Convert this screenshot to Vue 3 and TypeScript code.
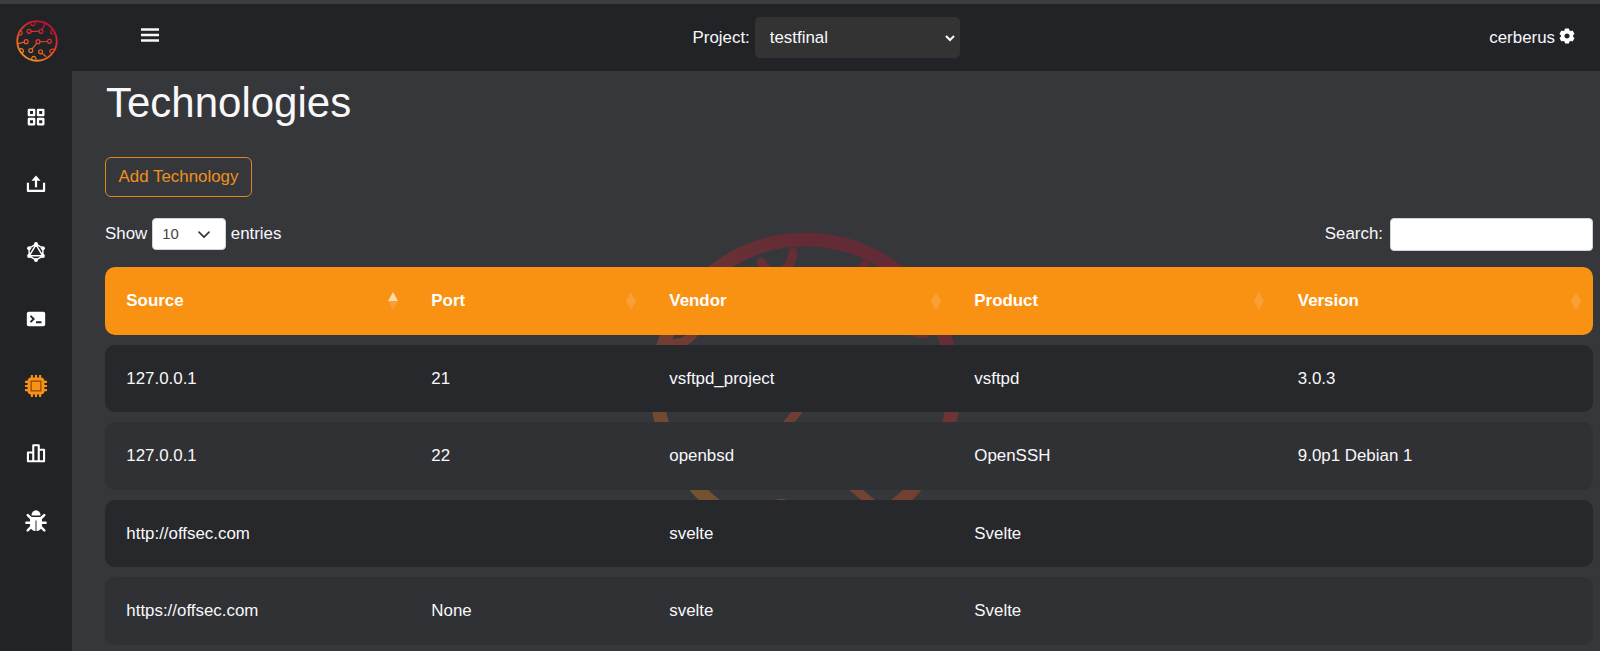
<script setup lang="ts">
import { ref } from 'vue'

interface Technology {
  source: string
  port: string
  vendor: string
  product: string
  version: string
}

const project = ref('testfinal')
const pageSize = ref('10')
const search = ref('')

const columns = ['Source', 'Port', 'Vendor', 'Product', 'Version']

const rows: Technology[] = [
  { source: '127.0.0.1', port: '21', vendor: 'vsftpd_project', product: 'vsftpd', version: '3.0.3' },
  { source: '127.0.0.1', port: '22', vendor: 'openbsd', product: 'OpenSSH', version: '9.0p1 Debian 1' },
  { source: 'http://offsec.com', port: '', vendor: 'svelte', product: 'Svelte', version: '' },
  { source: 'https://offsec.com', port: 'None', vendor: 'svelte', product: 'Svelte', version: '' },
]
</script>

<template>
  <div class="page">
    <svg width="0" height="0" class="defs">
      <defs>
        <linearGradient id="brand" gradientUnits="userSpaceOnUse" x1="22" y1="-50" x2="-38" y2="58">
          <stop offset="0" stop-color="#c2122f" />
          <stop offset="0.45" stop-color="#e8402a" />
          <stop offset="1" stop-color="#f79a1c" />
        </linearGradient>
        <symbol id="brain" viewBox="-64 -64 128 128">
          <g fill="none" stroke="url(#brand)" stroke-width="3.6" stroke-linecap="round">
            <circle r="60.2" stroke-width="5.6" />
            <circle cx="-24" cy="-29.5" r="6" />
            <circle cx="12" cy="-29.5" r="6" />
            <path d="M-18-29.51L6-29.5M15-34.500L24-50" />
            <circle cx="-33" cy="2" r="6" />
            <path d="M-39 3L-56 8" />
            <circle cx="3" cy="2" r="6" />
            <circle cx="38" cy="1" r="6" />
            <path d="M9 2.01L32 1.500M-1 7L-15 24" />
            <circle cx="-19" cy="29" r="6" />
            <circle cx="11" cy="33" r="6" />
            <path d="M15 37L27 47" />
            <path d="M-18-51C-16-45-6-45-5-55" />
            <path d="M50-35C39-31 39-21 49-22" />
            <path d="M-51-31C-42-28-43-19-53-18" />
            <path d="M-53 24C-43 21-37 30-45 36" />
            <path d="M-16 55C-17 44.500-3 44.500-3 55" />
            <path d="M50 25C38 24 36 33 43 37" />
          </g>
        </symbol>
      </defs>
    </svg>

    <div class="strip"></div>

    <div class="shell">
      <aside class="sidebar">
        <svg class="logo"><use href="#brain" /></svg>
        <nav class="nav">
          <a class="nav-item">
            <svg viewBox="0 0 24 24" fill="none" stroke="currentColor" stroke-width="2.5" stroke-linejoin="round">
              <path d="M4.200 4.200h5.800v5.800H4.200zM14.200 4.200h5.800v5.800h-5.800zM4.200 14.200h5.800v5.800H4.200zM14.200 14.200h5.800v5.800h-5.800z" />
            </svg>
          </a>
          <a class="nav-item">
            <svg viewBox="0 0 24 24" fill="none" stroke="currentColor" stroke-width="2.4" stroke-linejoin="round">
              <path d="M3.200 10.500v9h17.600v-9M12 15.500V7" />
              <path d="M12 2.800l5 5.700H7z" fill="currentColor" stroke="none" />
            </svg>
          </a>
          <a class="nav-item">
            <svg viewBox="0 0 24 24" fill="none" stroke="currentColor" stroke-width="1.600">
              <path d="M12 3.500l7.500 4.300v8.600L12 20.700l-7.500-4.300V7.800zM12 4L4.700 16.200h14.600z" />
              <g fill="currentColor" stroke="none">
                <circle cx="12" cy="3.300" r="2.200" /><circle cx="19.500" cy="7.800" r="2.200" />
                <circle cx="19.500" cy="16.300" r="2.200" /><circle cx="12" cy="20.700" r="2.200" />
                <circle cx="4.500" cy="16.300" r="2.200" /><circle cx="4.500" cy="7.800" r="2.200" />
              </g>
            </svg>
          </a>
          <a class="nav-item">
            <svg viewBox="0 0 24 24">
              <rect x="2" y="4" width="20" height="16" rx="2" fill="currentColor" />
              <path d="M6 8.500l3.500 3.500L6 15.500M12 15.500h6" fill="none" stroke="#222326" stroke-width="2" />
            </svg>
          </a>
          <a class="nav-item active">
            <svg viewBox="0 0 24 24">
              <rect x="2.800" y="2.800" width="18.400" height="18.400" rx="4" fill="currentColor" />
              <path d="M7.500 .4v4M12 .4v4M16.500 .4v4M7.500 19.600v4M12 19.600v4M16.500 19.600v4M.4 7.500h4M.4 12h4M.4 16.500h4M19.600 7.500h4M19.600 12h4M19.600 16.500h4" stroke="currentColor" stroke-width="2.300" stroke-linecap="round" />
              <rect x="6.700" y="6.700" width="10.600" height="10.600" fill="none" stroke="#7a4a18" stroke-width="1.300" />
            </svg>
          </a>
          <a class="nav-item">
            <svg viewBox="0 0 24 24" fill="none" stroke="currentColor" stroke-width="2.300" stroke-linejoin="round">
              <path d="M3.200 21V11.500h5.800v9.500zM9 21V3.500h6v17.500zM15 21V8.500h5.800v12.500z" />
            </svg>
          </a>
          <a class="nav-item">
            <svg viewBox="0 0 24 24" fill="none" stroke="currentColor" stroke-width="2.700" stroke-linecap="round">
              <path d="M7 6a5 5.800 0 0 1 10 0z" fill="currentColor" stroke="none" />
              <path d="M5.500 7.500h13v9c0 4-3 6.500-6.500 6.500S5.500 20.500 5.500 16.500z" fill="currentColor" stroke="none" />
              <path d="M6.500 9L3 5.500M17.500 9L21 5.500M6 14H1.500M18 14h4.500M7 18l-4 4.300M17 18l4 4.300" />
              <path d="M12 11.500V23" stroke="#4b4c50" stroke-width="1.300" stroke-linecap="butt" />
            </svg>
          </a>
        </nav>
      </aside>

      <div class="main">
        <header class="topbar">
          <button class="burger" aria-label="Menu">
            <svg width="18" height="14" viewBox="0 0 18 14">
              <path d="M0 1.500h18M0 7h18M0 12.500h18" stroke="#f8f8fb" stroke-width="2.600" />
            </svg>
          </button>
          <label class="project">
            <span>Project:</span>
            <span class="select-wrap">
              <select v-model="project" class="project-select">
                <option>testfinal</option>
              </select>
              <svg class="project-arrow" width="10" height="7" viewBox="0 0 10 7">
                <path d="M1 1l4 4 4-4" fill="none" stroke="#fff" stroke-width="2" />
              </svg>
            </span>
          </label>
          <div class="user">
            <span>cerberus</span>
            <svg class="gear" width="16" height="16" viewBox="-8 -8 16 16">
              <circle r="4.400" fill="none" stroke="#fff" stroke-width="3.600" />
              <g fill="#fff">
                <rect v-for="angle in [0, 60, 120, 180, 240, 300]" :key="angle" x="-2.200" y="-7.600" width="4.400" height="3" rx="0.800" :transform="`rotate(${angle})`" />
              </g>
            </svg>
          </div>
        </header>

        <main class="content">
          <svg class="watermark"><use href="#brain" /></svg>
          <h1>Technologies</h1>
          <button class="add">Add Technology</button>

          <div class="controls">
            <label class="length">
              <span>Show</span>
              <span class="select-wrap">
                <select v-model="pageSize" class="length-select">
                  <option>10</option>
                </select>
                <svg class="length-arrow" width="12" height="8" viewBox="0 0 12 8">
                  <path d="M1 1.200l5 5 5-5" fill="none" stroke="#343a40" stroke-width="1.700" stroke-linecap="round" stroke-linejoin="round" />
                </svg>
              </span>
              <span>entries</span>
            </label>
            <label class="search">
              <span>Search:</span>
              <input v-model="search" type="search" />
            </label>
          </div>

          <div class="table" role="table">
            <div class="row head" role="row">
              <div v-for="(name, i) in columns" :key="name" class="cell" role="columnheader">
                <span>{{ name }}</span>
                <svg class="sort" width="10" height="18" viewBox="0 0 10 18">
                  <path d="M0 9L5 0l5 9z" fill="#fff" :opacity="i === 0 ? 0.65 : 0.14" />
                  <path d="M0 9l5 9 5-9z" fill="#fff" opacity="0.140" />
                </svg>
              </div>
            </div>
            <div v-for="row in rows" :key="row.source + row.port" class="row" role="row">
              <div class="cell">{{ row.source }}</div>
              <div class="cell">{{ row.port }}</div>
              <div class="cell">{{ row.vendor }}</div>
              <div class="cell">{{ row.product }}</div>
              <div class="cell">{{ row.version }}</div>
            </div>
          </div>
        </main>
      </div>
    </div>
  </div>
</template>

<style>
body {
  margin: 0;
  overflow: hidden;
}
</style>

<style scoped>
* {
  box-sizing: border-box;
}
.page {
  display: flex;
  flex-direction: column;
  width: 1600px;
  height: 651px;
  overflow: hidden;
  background: #36373a;
  color: #f8f8fb;
  font-family: "Liberation Sans", Arial, sans-serif;
  font-size: 16.9px;
  line-height: 25px;
}
.defs {
  position: absolute;
}
.strip {
  flex: none;
  height: 4px;
  background: #3c3d3c;
}
.shell {
  display: flex;
  flex: 1;
  min-height: 0;
}
.sidebar {
  display: flex;
  flex: none;
  flex-direction: column;
  align-items: center;
  width: 72px;
  background: #222326;
}
.logo {
  flex: none;
  width: 42px;
  height: 42px;
  margin: 16px 0 0 2px;
}
.nav {
  display: flex;
  flex-direction: column;
  margin-top: 21.300px;
}
.nav-item {
  display: flex;
  align-items: center;
  justify-content: center;
  height: 67.300px;
  color: #fff;
}
.nav-item svg {
  width: 22px;
  height: 22px;
}
.nav-item.active {
  color: #f99113;
}
.main {
  display: flex;
  flex: 1;
  flex-direction: column;
}
.topbar {
  display: grid;
  flex: none;
  grid-template-columns: 551.500px 1fr auto;
  height: 67px;
  padding: 0 25px 0 69px;
  background: #222326;
}
.burger {
  display: flex;
  justify-self: start;
  height: 14px;
  margin-top: 24px;
  padding: 0;
  border: 0;
  background: none;
}
.project {
  display: flex;
  gap: 5px;
  justify-self: start;
  height: 41px;
  margin-top: 13px;
  line-height: 41px;
}
.select-wrap {
  position: relative;
  display: block;
}
select {
  display: block;
  margin: 0;
  appearance: none;
  font-family: inherit;
}
.project-select {
  width: 205px;
  height: 41px;
  padding: 0 15px;
  border: 0;
  border-radius: 5px;
  background: #333;
  color: #f8f8fb;
  font-size: 16.9px;
}
.project-arrow {
  position: absolute;
  top: 18px;
  right: 5px;
}
.user {
  display: flex;
  gap: 4px;
  height: 41px;
  margin-top: 13px;
  line-height: 41px;
}
.gear {
  margin-top: 10.500px;
}
.content {
  position: relative;
  flex: 1;
  padding: 0 7px 0 33px;
}
.watermark {
  position: absolute;
  top: 159px;
  left: 575.500px;
  width: 315px;
  height: 315px;
  opacity: 0.32;
}
h1 {
  margin: 0 0 0 1px;
  padding-top: 7px;
  font-size: 42px;
  font-weight: 400;
  line-height: 50px;
}
.add {
  display: block;
  width: 147px;
  height: 40px;
  margin-top: 29px;
  padding: 0;
  border: 1px solid #d98826;
  border-radius: 6px;
  background: none;
  color: #ef9020;
  font-family: inherit;
  font-size: 16.9px;
}
.controls {
  display: flex;
  justify-content: space-between;
  height: 33px;
  margin-top: 21px;
  line-height: 31px;
}
.length {
  display: flex;
  gap: 5px;
}
.length-select {
  width: 73.500px;
  height: 32px;
  padding: 0 9px;
  border: 1px solid #ced4da;
  border-radius: 4px;
  background: #fff;
  color: #444;
  font-size: 14.800px;
}
.length-arrow {
  position: absolute;
  top: 13px;
  right: 16px;
}
.search {
  display: flex;
  gap: 7px;
}
.search input {
  width: 203px;
  height: 33px;
  padding: 4px 8px;
  border: 1px solid #ced4da;
  border-radius: 4px;
  background: #fff;
}
.table {
  position: relative;
  display: flex;
  flex-direction: column;
  gap: 10px;
  margin-top: 16px;
}
.row {
  display: grid;
  flex: none;
  grid-template-columns: 305px 238px 305px 323.500px 1fr;
  height: 67.500px;
  border-radius: 10px;
  background: #303134;
}
.row:nth-child(even) {
  background: #27282b;
}
.row.head {
  background: #f99113;
  color: #fff;
  font-weight: 700;
}
.cell {
  display: flex;
  align-items: center;
  justify-content: space-between;
  padding: 0 12.500px 0 21.300px;
}
.sort {
  flex: none;
}
</style>
